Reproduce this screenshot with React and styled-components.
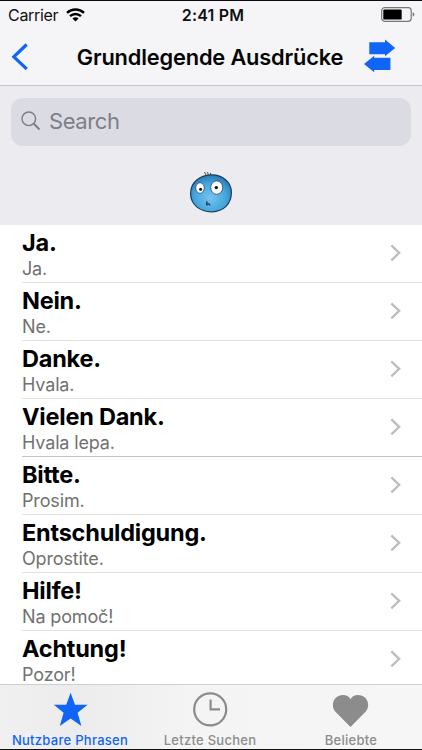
import React from "react";
import styled, { createGlobalStyle } from "styled-components";

const GlobalStyle = createGlobalStyle`
  * {
    box-sizing: border-box;
  }
  body {
    margin: 0;
    background: #ffffff;
    font-family: Inter, "Liberation Sans", sans-serif;
  }
`;

const Screen = styled.div`
  width: 422px;
  height: 750px;
  display: flex;
  flex-direction: column;
  overflow: hidden;
  background: #ffffff;
  border-top: 1px solid #0c0812;
  border-bottom: 1px solid #111111;
`;

const Header = styled.header`
  flex: none;
  height: 85px;
  background: #f5f5f7;
  border-bottom: 1px solid #c9c9cd;
`;

const StatusBar = styled.div`
  height: 27px;
  display: grid;
  grid-template-columns: 1fr auto 1fr;
  align-items: center;
  padding: 0 7px 0 8px;
  color: #111111;
`;

const Carrier = styled.div`
  display: flex;
  align-items: center;
  gap: 8px;
  font-size: 16px;
  letter-spacing: -0.3px;
`;

const Time = styled.div`
  padding-left: 3px;
  font-size: 16px;
  font-weight: 600;
  letter-spacing: 0.2px;
`;

const BatteryIcon = styled.svg`
  justify-self: end;
`;

const NavBar = styled.nav`
  height: 57px;
  display: flex;
  align-items: center;
  padding: 0 26px 0 11px;
`;

const NavTitle = styled.h1`
  flex: 1;
  margin: 0;
  padding: 1px 0 0 27px;
  text-align: center;
  white-space: nowrap;
  font-size: 21.8px;
  font-weight: 600;
  letter-spacing: -0.16px;
  color: #050505;
`;

const IconButton = styled.button`
  display: flex;
  padding: 0 0 2px;
  border: none;
  background: none;
`;

const SearchArea = styled.section`
  flex: none;
  height: 139px;
  padding: 12px 11px 0;
  background: #ebebf0;
`;

const SearchField = styled.div`
  height: 48px;
  display: flex;
  align-items: center;
  gap: 8px;
  padding: 0 0 2px 10px;
  border-radius: 12px;
  background: #dbdbe3;
  color: #7e7e85;
  font-size: 22px;
  letter-spacing: -0.4px;
`;

const Mascot = styled.div`
  display: flex;
  justify-content: center;
  padding-top: 24px;
`;

const PhraseList = styled.ul`
  flex: 1;
  min-height: 0;
  overflow: hidden;
  margin: 0;
  padding: 0 0 0 22px;
  list-style: none;
`;

const PhraseRow = styled.li`
  height: 58px;
  display: flex;
  align-items: center;
  justify-content: space-between;
  padding-right: 21px;
  border-bottom: 1px solid ${(props) => (props.$dark ? "#c4c4c7" : "#e1e1e4")};
`;

const PhraseText = styled.div`
  padding-top: 2px;
`;

const Phrase = styled.div`
  margin-bottom: 1px;
  font-size: 23.5px;
  line-height: 28px;
  font-weight: 700;
  letter-spacing: -0.22px;
  color: #000000;
`;

const Translation = styled.div`
  font-size: 18px;
  line-height: 22px;
  letter-spacing: -0.15px;
  color: #717171;
`;

const TabBar = styled.footer`
  flex: none;
  height: 65px;
  display: grid;
  grid-template-columns: 140px 140px 142px;
  border-top: 1px solid #cfcfd0;
  background: linear-gradient(90deg, #f0f0f1 0%, #ececed 18%, #f4f4f5 45%, #f6f6f7 100%);
`;

const Tab = styled.div`
  display: flex;
  flex-direction: column;
  align-items: center;
  justify-content: space-between;
  padding: 7px 0 1px;
  color: ${(props) => (props.$active ? "#1064f8" : "#8c8c8c")};
`;

const TabLabel = styled.span`
  font-size: 13px;
  line-height: 16px;
  font-weight: 500;
  white-space: nowrap;
  letter-spacing: 0.28px;
`;

const phrases = [
  { title: "Ja.", text: "Ja." },
  { title: "Nein.", text: "Ne." },
  { title: "Danke.", text: "Hvala." },
  { title: "Vielen Dank.", text: "Hvala lepa.", dark: true },
  { title: "Bitte.", text: "Prosim." },
  { title: "Entschuldigung.", text: "Oprostite." },
  { title: "Hilfe!", text: "Na pomoč!" },
  { title: "Achtung!", text: "Pozor!" },
];

const WifiIcon = () => (
  <svg width="19" height="14" viewBox="0 0 19 14" fill="none" stroke="#000" strokeWidth="2.4">
    <path d="M1 4.8C5.8 0.3 13.2 0.3 18 4.8" />
    <path d="M4 8.2C7.2 5.2 11.8 5.2 15 8.2" />
    <path d="M6.4 10.4C8.2 8.8 10.8 8.8 12.6 10.4L9.5 13.5Z" fill="#000" stroke="none" />
  </svg>
);

const Battery = () => (
  <BatteryIcon width="34" height="16" viewBox="0 0 34 16">
    <rect x="0.7" y="0.7" width="29.5" height="13.6" rx="3" fill="none" stroke="#77777a" strokeWidth="1.2" />
    <rect x="2.3" y="2.4" width="18.4" height="10.2" rx="1.2" fill="#000" />
    <path d="M31.7 5.3Q33.4 5.9 33.4 7.5Q33.4 9.1 31.7 9.7Z" fill="#77777a" />
  </BatteryIcon>
);

const BackIcon = () => (
  <svg width="18" height="28" viewBox="0 0 18 28" fill="none">
    <path d="M15.7 2.5L2.8 14.8L15.7 27" stroke="#1064f8" strokeWidth="3.2" />
  </svg>
);

const SwapIcon = () => (
  <svg width="32" height="34" viewBox="0 0 32 34" fill="#1064f8">
    <path d="M5.3 3.2H21V0.6L31.2 9L21 17.2V15.2H5.3Z" />
    <path d="M26.4 31H10.2V33.2L0 25L10.2 16.8V18.8H26.4Z" />
  </svg>
);

const Chevron = () => (
  <svg width="11" height="20" viewBox="0 0 11 20" fill="none">
    <path d="M1.3 1.3L9.2 8.8L1.3 16.3" stroke="#bdbdc1" strokeWidth="2.3" />
  </svg>
);

const MascotIcon = () => (
  <svg width="44" height="44" viewBox="0 0 44 44">
    <defs>
      <radialGradient id="skin" cx="48%" cy="62%" r="60%">
        <stop offset="0" stopColor="#74c4ef" />
        <stop offset="0.65" stopColor="#45a5dc" />
        <stop offset="1" stopColor="#2a7db8" />
      </radialGradient>
    </defs>
    <path d="M17.5 6L15.5 2M19.5 5.5L18.5 2M21.5 5.5L21.5 2.8" stroke="#333" strokeWidth="0.9" />
    <path
      d="M22 4.9C33 4.3 42.4 12 42.4 22.6C42.4 34 34.5 41.6 23 41.8C11 42 1.6 34.5 1.6 23.5C1.6 12.5 10.5 5.4 22 4.9Z"
      fill="url(#skin)"
      stroke="#1c3f5c"
      strokeWidth="1.2"
    />
    <ellipse cx="11" cy="18" rx="4.3" ry="5.3" fill="#fff" stroke="#224e70" strokeWidth="0.8" />
    <ellipse cx="27.7" cy="17.6" rx="6" ry="6.7" fill="#fff" stroke="#224e70" strokeWidth="0.8" />
    <circle cx="11.6" cy="19.3" r="1.5" fill="#111" />
    <circle cx="27.3" cy="17.6" r="1.7" fill="#111" />
    <path d="M17.8 31.2V35.5M17.8 34.5Q19.5 33 21 35.3" stroke="#17374e" strokeWidth="1.3" fill="none" />
  </svg>
);

const App = () => (
  <>
    <GlobalStyle />
    <Screen>
      <Header>
        <StatusBar>
          <Carrier>
            Carrier
            <WifiIcon />
          </Carrier>
          <Time>2:41 PM</Time>
          <Battery />
        </StatusBar>
        <NavBar>
          <IconButton aria-label="Back">
            <BackIcon />
          </IconButton>
          <NavTitle>Grundlegende Ausdrücke</NavTitle>
          <IconButton aria-label="Swap languages">
            <SwapIcon />
          </IconButton>
        </NavBar>
      </Header>
      <SearchArea>
        <SearchField>
          <svg width="20" height="20" viewBox="0 0 20 20" fill="none" stroke="#7e7e85">
            <circle cx="7.8" cy="7.8" r="6.8" strokeWidth="1.4" />
            <path d="M12.8 12.8L18.5 18.5" strokeWidth="2" />
          </svg>
          Search
        </SearchField>
        <Mascot>
          <MascotIcon />
        </Mascot>
      </SearchArea>
      <PhraseList>
        {phrases.map((phrase) => (
          <PhraseRow key={phrase.title} $dark={phrase.dark}>
            <PhraseText>
              <Phrase>{phrase.title}</Phrase>
              <Translation>{phrase.text}</Translation>
            </PhraseText>
            <Chevron />
          </PhraseRow>
        ))}
      </PhraseList>
      <TabBar>
        <Tab $active>
          <svg width="36" height="36" viewBox="0 0 36 36" fill="currentColor">
            <path d="M18.6 0.8L23 12.7H35.6L25.6 20.8L29.4 34L18.6 26.4L7.8 34L11.6 20.8L1.8 12.7H14.2Z" />
          </svg>
          <TabLabel>Nutzbare Phrasen</TabLabel>
        </Tab>
        <Tab>
          <svg width="36" height="36" viewBox="0 0 36 36" fill="none" stroke="currentColor">
            <circle cx="18.2" cy="17.4" r="16" strokeWidth="2.2" />
            <path d="M18.6 7.4V17.4H28" strokeWidth="2.2" />
          </svg>
          <TabLabel>Letzte Suchen</TabLabel>
        </Tab>
        <Tab>
          <svg width="36" height="36" viewBox="0 0 36 36" fill="currentColor">
            <path d="M17.5 35L2.2 19.5C-2 14.8 -0.5 6 6.1 3.8C10.7 2.3 15.3 3.2 17.5 7.3C19.7 3.2 24.3 2.3 28.9 3.8C35.5 6 37 14.8 32.8 19.5Z" />
          </svg>
          <TabLabel>Beliebte</TabLabel>
        </Tab>
      </TabBar>
    </Screen>
  </>
);

export default App;
